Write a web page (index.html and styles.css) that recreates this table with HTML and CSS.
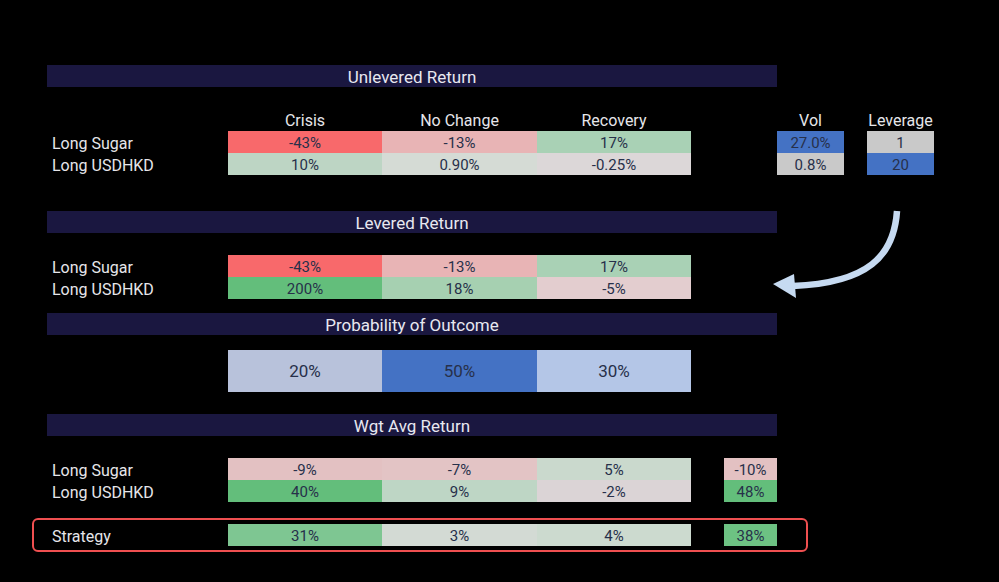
FILE: index.html
```html
<!DOCTYPE html>
<html>
<head>
<meta charset="utf-8">
<link rel="stylesheet" href="styles.css">
</head>
<body>
<div class="sheet">
  <section class="block b1">
    <div class="bar">Unlevered Return</div>
    <div class="grid g-head">
      <div class="first"></div><div class="hd">Crisis</div><div class="hd">No Change</div><div class="hd">Recovery</div><div></div><div></div><div class="hd">Vol</div><div></div><div class="hd">Leverage</div>
      <div class="lbl">Long Sugar</div><div class="c c-red">-43%</div><div class="c c-pink">-13%</div><div class="c c-mint">17%</div><div></div><div></div><div class="c c-blue">27.0%</div><div></div><div class="c c-gray">1</div>
      <div class="lbl">Long USDHKD</div><div class="c c-lgreen">10%</div><div class="c c-neutral">0.90%</div><div class="c c-lpink">-0.25%</div><div></div><div></div><div class="c c-gray">0.8%</div><div></div><div class="c c-blue">20</div>
    </div>
  </section>

  <section class="block b2">
    <div class="bar">Levered Return</div>
    <div class="grid g-body">
      <div class="lbl">Long Sugar</div><div class="c c-red">-43%</div><div class="c c-pink">-13%</div><div class="c c-mint">17%</div>
      <div class="lbl">Long USDHKD</div><div class="c c-green">200%</div><div class="c c-mint2">18%</div><div class="c c-lpink2">-5%</div>
    </div>
  </section>

  <section class="block b3">
    <div class="bar">Probability of Outcome</div>
    <div class="grid g-prob">
      <div class="first"></div><div class="c tall c-p1">20%</div><div class="c tall c-blue">50%</div><div class="c tall c-p3">30%</div>
    </div>
  </section>

  <section class="block b4">
    <div class="bar">Wgt Avg Return</div>
    <div class="grid g-body">
      <div class="lbl">Long Sugar</div><div class="c c-w1">-9%</div><div class="c c-w2">-7%</div><div class="c c-w3">5%</div><div></div><div class="c c-w1">-10%</div>
      <div class="lbl">Long USDHKD</div><div class="c c-green">40%</div><div class="c c-w5">9%</div><div class="c c-w6">-2%</div><div></div><div class="c c-green">48%</div>
    </div>
    <div class="strategy">
      <div class="grid g-body">
        <div class="lbl">Strategy</div><div class="c c-s1">31%</div><div class="c c-s2">3%</div><div class="c c-s3">4%</div><div></div><div class="c c-s4">38%</div>
      </div>
    </div>
  </section>

  <svg class="arrow" width="999" height="582" viewBox="0 0 999 582">
    <path d="M897 211 C894 256 868 283 793 286" fill="none" stroke="#c6daf1" stroke-width="6.5"/>
    <polygon points="773,284 794,274 796,298" fill="#c6daf1"/>
  </svg>
</div>
</body>
</html>
```

FILE: styles.css
```css
html, body {
  margin: 0;
  padding: 0;
  background: #000;
}
body {
  width: 999px;
  height: 582px;
  overflow: hidden;
  font-family: Roboto, "Liberation Sans", sans-serif;
  color: #e6e6ea;
}
.sheet {
  position: relative;
  padding: 65px 0 0 47px;
  height: 582px;
  box-sizing: border-box;
}
.bar {
  width: 730px;
  height: 22px;
  box-sizing: border-box;
  padding-top: 1px;
  line-height: 22px;
  background: #1a1740;
  color: #e8e8f0;
  text-align: center;
  font-size: 17px;
}
.grid {
  display: grid;
  grid-template-columns: 181px 154px 155px 154px 33px 53px 67px 23px 67px;
  grid-auto-rows: 22px;
}
.grid > .lbl,
.grid > .first { grid-column: 1; }
.g-head { margin-top: 22px; }
.b2 { margin-top: 36px; }
.b2 .grid { margin-top: 22px; }
.b3 { margin-top: 14px; }
.g-prob { margin-top: 15px; grid-auto-rows: 42px; }
.b4 { margin-top: 22px; }
.b4 > .grid { margin-top: 22px; }

.hd {
  text-align: center;
  font-size: 16px;
  line-height: 22px;
  padding-top: 1px;
  color: #e6e6ea;
}
.lbl {
  padding-left: 5px;
  padding-top: 2px;
  font-size: 16px;
  line-height: 22px;
  color: #e6e6ea;
  white-space: nowrap;
}
.c {
  text-align: center;
  font-size: 15px;
  line-height: 22px;
  padding-top: 1px;
  box-sizing: border-box;
  color: #27304a;
}
.c.tall {
  line-height: 40px;
  font-size: 17px;
}

.c-red { background: #f8696b; }
.c-pink { background: #e8b4b5; }
.c-mint { background: #a9d1b5; }
.c-lgreen { background: #bdd5c4; }
.c-neutral { background: #d5dbd5; }
.c-lpink { background: #dcd7d8; }
.c-blue { background: #4472c4; }
.c-gray { background: #c9c9c9; }
.c-green { background: #63be7b; }
.c-mint2 { background: #a6d0b1; }
.c-lpink2 { background: #e3cdcf; }
.c-p1 { background: #b8c2db; }
.c-p3 { background: #b4c6e7; }
.c-w1 { background: #e3c1c2; }
.c-w2 { background: #e3c4c5; }
.c-w3 { background: #cad9cd; }
.c-w5 { background: #bed6c5; }
.c-w6 { background: #dbd4d6; }
.c-s1 { background: #7ec692; }
.c-s2 { background: #d3dad4; }
.c-s3 { background: #ccdacf; }
.c-s4 { background: #6dc283; }

.strategy {
  margin-top: 16px;
  margin-left: -15px;
  width: 776px;
  height: 34px;
  box-sizing: border-box;
  border: 2px solid #ef4f50;
  border-radius: 6px;
  padding: 4px 0 0 13px;
}
.arrow {
  position: absolute;
  left: 0;
  top: 0;
  pointer-events: none;
}
```
